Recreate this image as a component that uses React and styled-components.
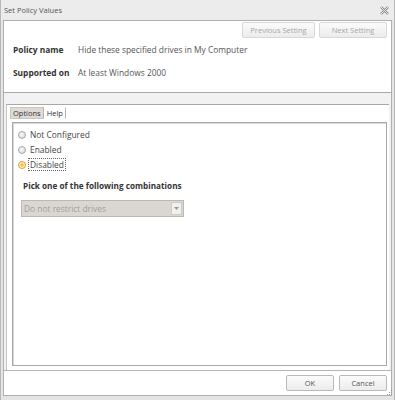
import styled, { createGlobalStyle } from "styled-components"

const Global = createGlobalStyle`
  html, body { margin: 0; padding: 0; background: #fff; }
  body { font-family: "Open Sans", "DejaVu Sans", sans-serif; }
`

const Window = styled.div`
  width: 395px;
  height: 400px;
  box-sizing: border-box;
  background: #e4e4e4;
  border-left: 1px solid #b8b8b8;
  border-right: 1px solid #b8b8b8;
  padding: 0 2px 4px 2px;
  display: flex;
  flex-direction: column;
  position: relative;
`
const TitleBar = styled.div`
  height: 20px;
  display: flex;
  align-items: center;
  justify-content: space-between;
  font-size: 7.5px;
  color: #555;
  background: #ececec;
  margin: 0 -2px;
  padding: 0 5px 0 3px;
`
const Body = styled.div`
  flex: 1;
  display: flex;
  flex-direction: column;
  background: #f2f2f2;
  border: 1px solid #b0b0b0;
`
const Header = styled.div`
  height: 70px;
  background: #fff;
  border-bottom: 1px solid #a9a9a9;
  padding: 1px 4px 0 9px;
  display: flex;
  flex-direction: column;
`
const NavRow = styled.div`
  display: flex;
  justify-content: flex-end;
  gap: 4px;
`
const Btn = styled.button`
  width: ${p => p.$w}px;
  height: 16px;
  padding: 0;
  border: 1px solid ${p => (p.$disabled ? "#d8d8d8" : "#b9b9b9")};
  border-radius: 2px;
  background: linear-gradient(#fbfbfb, #ececec);
  color: ${p => (p.$disabled ? "#a6a6a6" : "#555")};
  font-family: "Open Sans", "DejaVu Sans", sans-serif;
  font-size: 7.5px;
`
const InfoRow = styled.div`
  display: flex;
  align-items: center;
  height: 23px;
  font-size: 8.4px;
  color: #555;
  &:first-of-type { margin-top: 7px; }
`
const InfoLabel = styled.div`
  width: 65px;
  font-weight: 700;
  color: #333;
`
const Gap = styled.div`
  height: 11px;
`
const Main = styled.div`
  flex: 1;
  background: #fff;
  border-top: 1px solid #a9a9a9;
  border-left: 1px solid #c4c4c4;
  margin: 0 2px;
  padding: 2px 2px 4px 3px;
  display: flex;
  flex-direction: column;
`
const Tabs = styled.div`
  display: flex;
  align-items: stretch;
  height: 12px;
  margin-bottom: 3px;
`
const Tab = styled.div`
  font-size: 7.5px;
  color: #333;
  padding: 0 2px;
  display: flex;
  align-items: center;
  background: ${p => (p.$active ? "#dedad6" : "transparent")};
  border: 1px solid ${p => (p.$active ? "#c9c5c1" : "transparent")};
  border-right: 1px solid #b4b4b4;
`
const Panel = styled.div`
  flex: 1;
  margin-left: 2px;
  border: 1px solid #a8a8a8;
  box-shadow: inset 1px 1px 0 #d8d8d8;
  padding: 4px 4px 4px 5px;
  display: flex;
  flex-direction: column;
`
const RadioRow = styled.div`
  display: flex;
  align-items: center;
  height: 15px;
  gap: 3px;
  font-size: 8.4px;
  color: #444;
`
const Dot = styled.span`
  width: 8px;
  height: 8px;
  border-radius: 50%;
  box-sizing: border-box;
  border: 1px solid ${p => (p.$on ? "#e59a2a" : "#a6a6a6")};
  background: ${p =>
    p.$on
      ? "radial-gradient(circle, #f7c544 0 35%, #fff5cc 45% 100%)"
      : "radial-gradient(circle at 40% 35%, #fafafa, #d4d4d4)"};
`
const RadioText = styled.span`
  padding: 0 1px;
  outline: ${p => (p.$focus ? "1px dotted #666" : "none")};
  line-height: 11px;
`
const Section = styled.div`
  margin: 8px 0 0 5px;
  font-size: 8.2px;
  line-height: 12px;
  font-weight: 700;
  color: #333;
`
const Select = styled.div`
  margin: 8px 0 0 3px;
  width: 163px;
  height: 17px;
  box-sizing: border-box;
  background: #dad7d3;
  border: 1px solid #bcb9b5;
  display: flex;
  align-items: center;
  justify-content: space-between;
  padding-left: 2px;
  font-size: 8.4px;
  color: #a19e9a;
`
const Arrow = styled.div`
  width: 11px;
  height: 13px;
  margin-right: 1px;
  background: #f1f0ee;
  border: 1px solid #cfccc8;
  box-sizing: border-box;
  display: flex;
  align-items: center;
  justify-content: center;
`
const Footer = styled.div`
  height: 24px;
  background: #fff;
  border-top: 1px solid #b4b4b4;
  display: flex;
  align-items: center;
  justify-content: flex-end;
  gap: 5px;
  padding-right: 4px;
`
const Grip = styled.svg`
  position: absolute;
  right: 1px;
  bottom: 4px;
`

const App = () => {
  return (
    <Window>
      <Global />
      <TitleBar>
        <span>Set Policy Values</span>
        <svg width="9" height="9" viewBox="0 0 9 9">
          <path d="M1 1 L8 8 M8 1 L1 8" stroke="#8a8a8a" strokeWidth="2.4" />
          <path d="M1 1 L8 8 M8 1 L1 8" stroke="#f2f2f2" strokeWidth="0.9" />
        </svg>
      </TitleBar>
      <Body>
        <Header>
          <NavRow>
            <Btn $w={73} $disabled>Previous Setting</Btn>
            <Btn $w={68} $disabled>Next Setting</Btn>
          </NavRow>
          <InfoRow>
            <InfoLabel>Policy name</InfoLabel>
            <span>Hide these specified drives in My Computer</span>
          </InfoRow>
          <InfoRow>
            <InfoLabel>Supported on</InfoLabel>
            <span>At least Windows 2000</span>
          </InfoRow>
        </Header>
        <Gap />
        <Main>
          <Tabs>
            <Tab $active>Options</Tab>
            <Tab>Help</Tab>
          </Tabs>
          <Panel>
            <RadioRow><Dot /><RadioText>Not Configured</RadioText></RadioRow>
            <RadioRow><Dot /><RadioText>Enabled</RadioText></RadioRow>
            <RadioRow><Dot $on /><RadioText $focus>Disabled</RadioText></RadioRow>
            <Section>Pick one of the following combinations</Section>
            <Select>
              <span>Do not restrict drives</span>
              <Arrow>
                <svg width="5" height="3" viewBox="0 0 5 3">
                  <path d="M0 0 H5 L2.5 3 Z" fill="#9a9894" />
                </svg>
              </Arrow>
            </Select>
          </Panel>
        </Main>
        <Footer>
          <Btn $w={48}>OK</Btn>
          <Btn $w={48}>Cancel</Btn>
        </Footer>
      </Body>
      <Grip width="6" height="6" viewBox="0 0 6 6">
        <rect x="4" y="0" width="1" height="1" fill="#999" />
        <rect x="2" y="2" width="1" height="1" fill="#999" />
        <rect x="4" y="2" width="1" height="1" fill="#999" />
        <rect x="0" y="4" width="1" height="1" fill="#999" />
        <rect x="2" y="4" width="1" height="1" fill="#999" />
        <rect x="4" y="4" width="1" height="1" fill="#999" />
      </Grip>
    </Window>
  )
}

export default App
